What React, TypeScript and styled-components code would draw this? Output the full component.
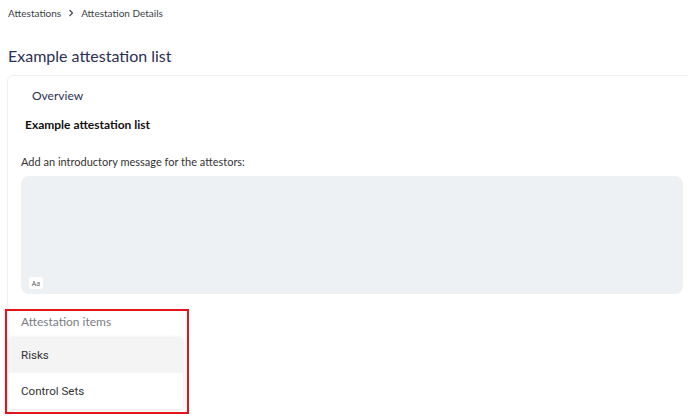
import React from "react";
import styled, { createGlobalStyle } from "styled-components";

const Global = createGlobalStyle`
  html, body { margin: 0; padding: 0; background: #ffffff; }
  body { font-family: Lato, "Open Sans", sans-serif; overflow: hidden; }
`;

const Page = styled.div`
  width: 688px;
  height: 416px;
  box-sizing: border-box;
  padding: 6px 0 0 8px;
  overflow: hidden;
`;

const Breadcrumbs = styled.nav`
  display: flex;
  align-items: center;
  gap: 6px;
  font-size: 10px;
  color: #3a3f4a;
  height: 14px;
`;

const Chevron = styled.svg`
  width: 8px;
  height: 8px;
`;

const Title = styled.h1`
  margin: 25px 0 0 0;
  font-size: 16px;
  font-weight: 400;
  color: #2b2f55;
  line-height: 22px;
`;

const Card = styled.section`
  margin: 8px -20px 0 -1px;
  height: 400px;
  border: 1px solid #f0f0f2;
  border-radius: 6px;
  box-shadow: 0 0 3px rgba(0, 0, 0, 0.03);
  padding: 12px 12px 0 13px;
  position: relative;
`;

const Tab = styled.div`
  font-size: 12px;
  color: #2b2f55;
  padding-left: 11px;
  line-height: 16px;
`;

const ListName = styled.h2`
  margin: 13px 0 0 4px;
  font-size: 12px;
  font-weight: 700;
  color: #111;
  line-height: 16px;
`;

const FieldLabel = styled.label`
  display: block;
  margin-top: 22px;
  font-size: 11px;
  color: #333;
  line-height: 14px;
`;

const MessageBox = styled.div`
  margin-top: 7px;
  width: 662px;
  height: 118px;
  background: #eef1f4;
  border-radius: 8px;
  display: flex;
  align-items: flex-end;
  padding: 0 0 5px 8px;
  box-sizing: border-box;
`;

const FormatBadge = styled.span`
  display: inline-flex;
  align-items: center;
  justify-content: center;
  width: 14px;
  height: 12px;
  background: #fff;
  border-radius: 3px;
  font-size: 7px;
  color: #555;
  font-family: "Open Sans", sans-serif;
`;

const ItemsSection = styled.div`
  position: relative;
  margin: 15px 0 0 -13px;
  width: 184px;
`;

const Highlight = styled.div`
  position: absolute;
  left: -3px;
  top: 0px;
  width: 184px;
  height: 105px;
  border: 2px solid #e3151a;
  box-sizing: border-box;
  pointer-events: none;
`;

const ItemsLabel = styled.div`
  font-size: 12px;
  color: #7a7d85;
  padding: 6px 0 0 13px;
  line-height: 14px;
`;

const Menu = styled.ul`
  list-style: none;
  margin: 8px 0 0 0;
  padding: 0;
  width: 175px;
  background: #fff;
  border-radius: 4px;
  box-shadow: 0 1px 4px rgba(0, 0, 0, 0.12);
  overflow: hidden;
`;

const MenuItem = styled.li<{ $active?: boolean }>`
  height: 36px;
  display: flex;
  align-items: center;
  padding-left: 13px;
  font-family: Roboto, sans-serif;
  font-size: 11.6px;
  color: #333;
  background: ${(p) => (p.$active ? "#f4f4f4" : "#fff")};
`;

export default function App() {
  return (
    <>
      <Global />
      <Page>
        <Breadcrumbs>
          <span>Attestations</span>
          <Chevron viewBox="0 0 8 8">
            <path d="M2.5 1 L5.5 4 L2.5 7" fill="none" stroke="#3a3f4a" strokeWidth="1.1" />
          </Chevron>
          <span>Attestation Details</span>
        </Breadcrumbs>
        <Title>Example attestation list</Title>
        <Card>
          <Tab>Overview</Tab>
          <ListName>Example attestation list</ListName>
          <FieldLabel>Add an introductory message for the attestors:</FieldLabel>
          <MessageBox>
            <FormatBadge>Aa</FormatBadge>
          </MessageBox>
          <ItemsSection>
            <Highlight />
            <ItemsLabel>Attestation items</ItemsLabel>
            <Menu>
              <MenuItem $active>Risks</MenuItem>
              <MenuItem>Control Sets</MenuItem>
            </Menu>
          </ItemsSection>
        </Card>
      </Page>
    </>
  );
}
